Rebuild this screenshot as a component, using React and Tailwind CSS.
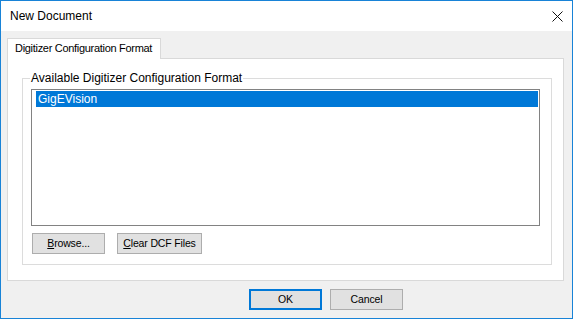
import React from "react";

const font = { fontFamily: '"Liberation Sans", Arial, sans-serif' };

function Btn({ children, className = "" }) {
  return (
    <div
      className={`h-[21px] flex items-center justify-center bg-[#e1e1e1] border border-[#adadad] text-[10.5px] leading-[13px] tracking-[-0.15px] text-black ${className}`}
    >
      {children}
    </div>
  );
}

export default function App() {
  return (
    <div
      className="w-[573px] h-[319px] border border-[#1883d7] bg-[#f0f0f0] flex flex-col overflow-hidden"
      style={font}
    >
      {/* Title bar */}
      <div className="h-[30px] bg-white flex items-center justify-between pl-[9px] pr-[9px] shrink-0">
        <span className="text-[12px] leading-[14px] text-black">New Document</span>
        <svg width="11" height="11" viewBox="0 0 11 11">
          <path d="M0.5 0.5 L10.5 10.5 M10.5 0.5 L0.5 10.5" stroke="#111" strokeWidth="1" />
        </svg>
      </div>

      {/* Body */}
      <div className="flex flex-col pt-[7px] pl-[6px]">
        {/* Tab header */}
        <div className="relative z-10 w-[154px] h-[21px] -mb-[1px] bg-white border-t border-l border-r border-[#d9d9d9] flex items-center pl-[7px] pb-[1px]">
          <span className="text-[11px] leading-[13px] tracking-[-0.3px] text-black">
            Digitizer Configuration Format
          </span>
        </div>

        {/* Tab panel */}
        <div className="w-[557px] h-[223px] bg-white border border-[#d9d9d9] pt-[19px] pl-[14px]">
          <div className="relative w-[530px] h-[187px] border border-[#dcdcdc] pt-[10px] pl-[8px]">
            <span className="absolute left-[7px] -top-[8px] bg-white px-[1px] text-[12px] leading-[14px] text-black">
              Available Digitizer Configuration Format
            </span>
            {/* Listbox */}
            <div className="w-[509px] h-[137px] border border-[#828282] bg-white pt-[1px] pl-[4px] pr-[1px]">
              <div className="h-[16px] bg-[#0078d7] text-white text-[12px] leading-[16px] pl-[2px]">
                GigEVision
              </div>
            </div>
            <div className="flex gap-[12px] mt-[7px] ml-[1px]">
              <Btn className="w-[73px]">
                <span><span className="underline">B</span>rowse...</span>
              </Btn>
              <Btn className="w-[85px]">
                <span><span className="underline">C</span>lear DCF Files</span>
              </Btn>
            </div>
          </div>
        </div>

        {/* Bottom buttons */}
        <div className="flex gap-[8px] mt-[8px] pl-[242px]">
          <div className="w-[73px] h-[21px] flex items-center justify-center bg-[#e1e1e1] border-2 border-[#0078d7] text-[10.5px] leading-[13px] tracking-[-0.15px] text-black">
            OK
          </div>
          <Btn className="w-[73px]">Cancel</Btn>
        </div>
      </div>
    </div>
  );
}
